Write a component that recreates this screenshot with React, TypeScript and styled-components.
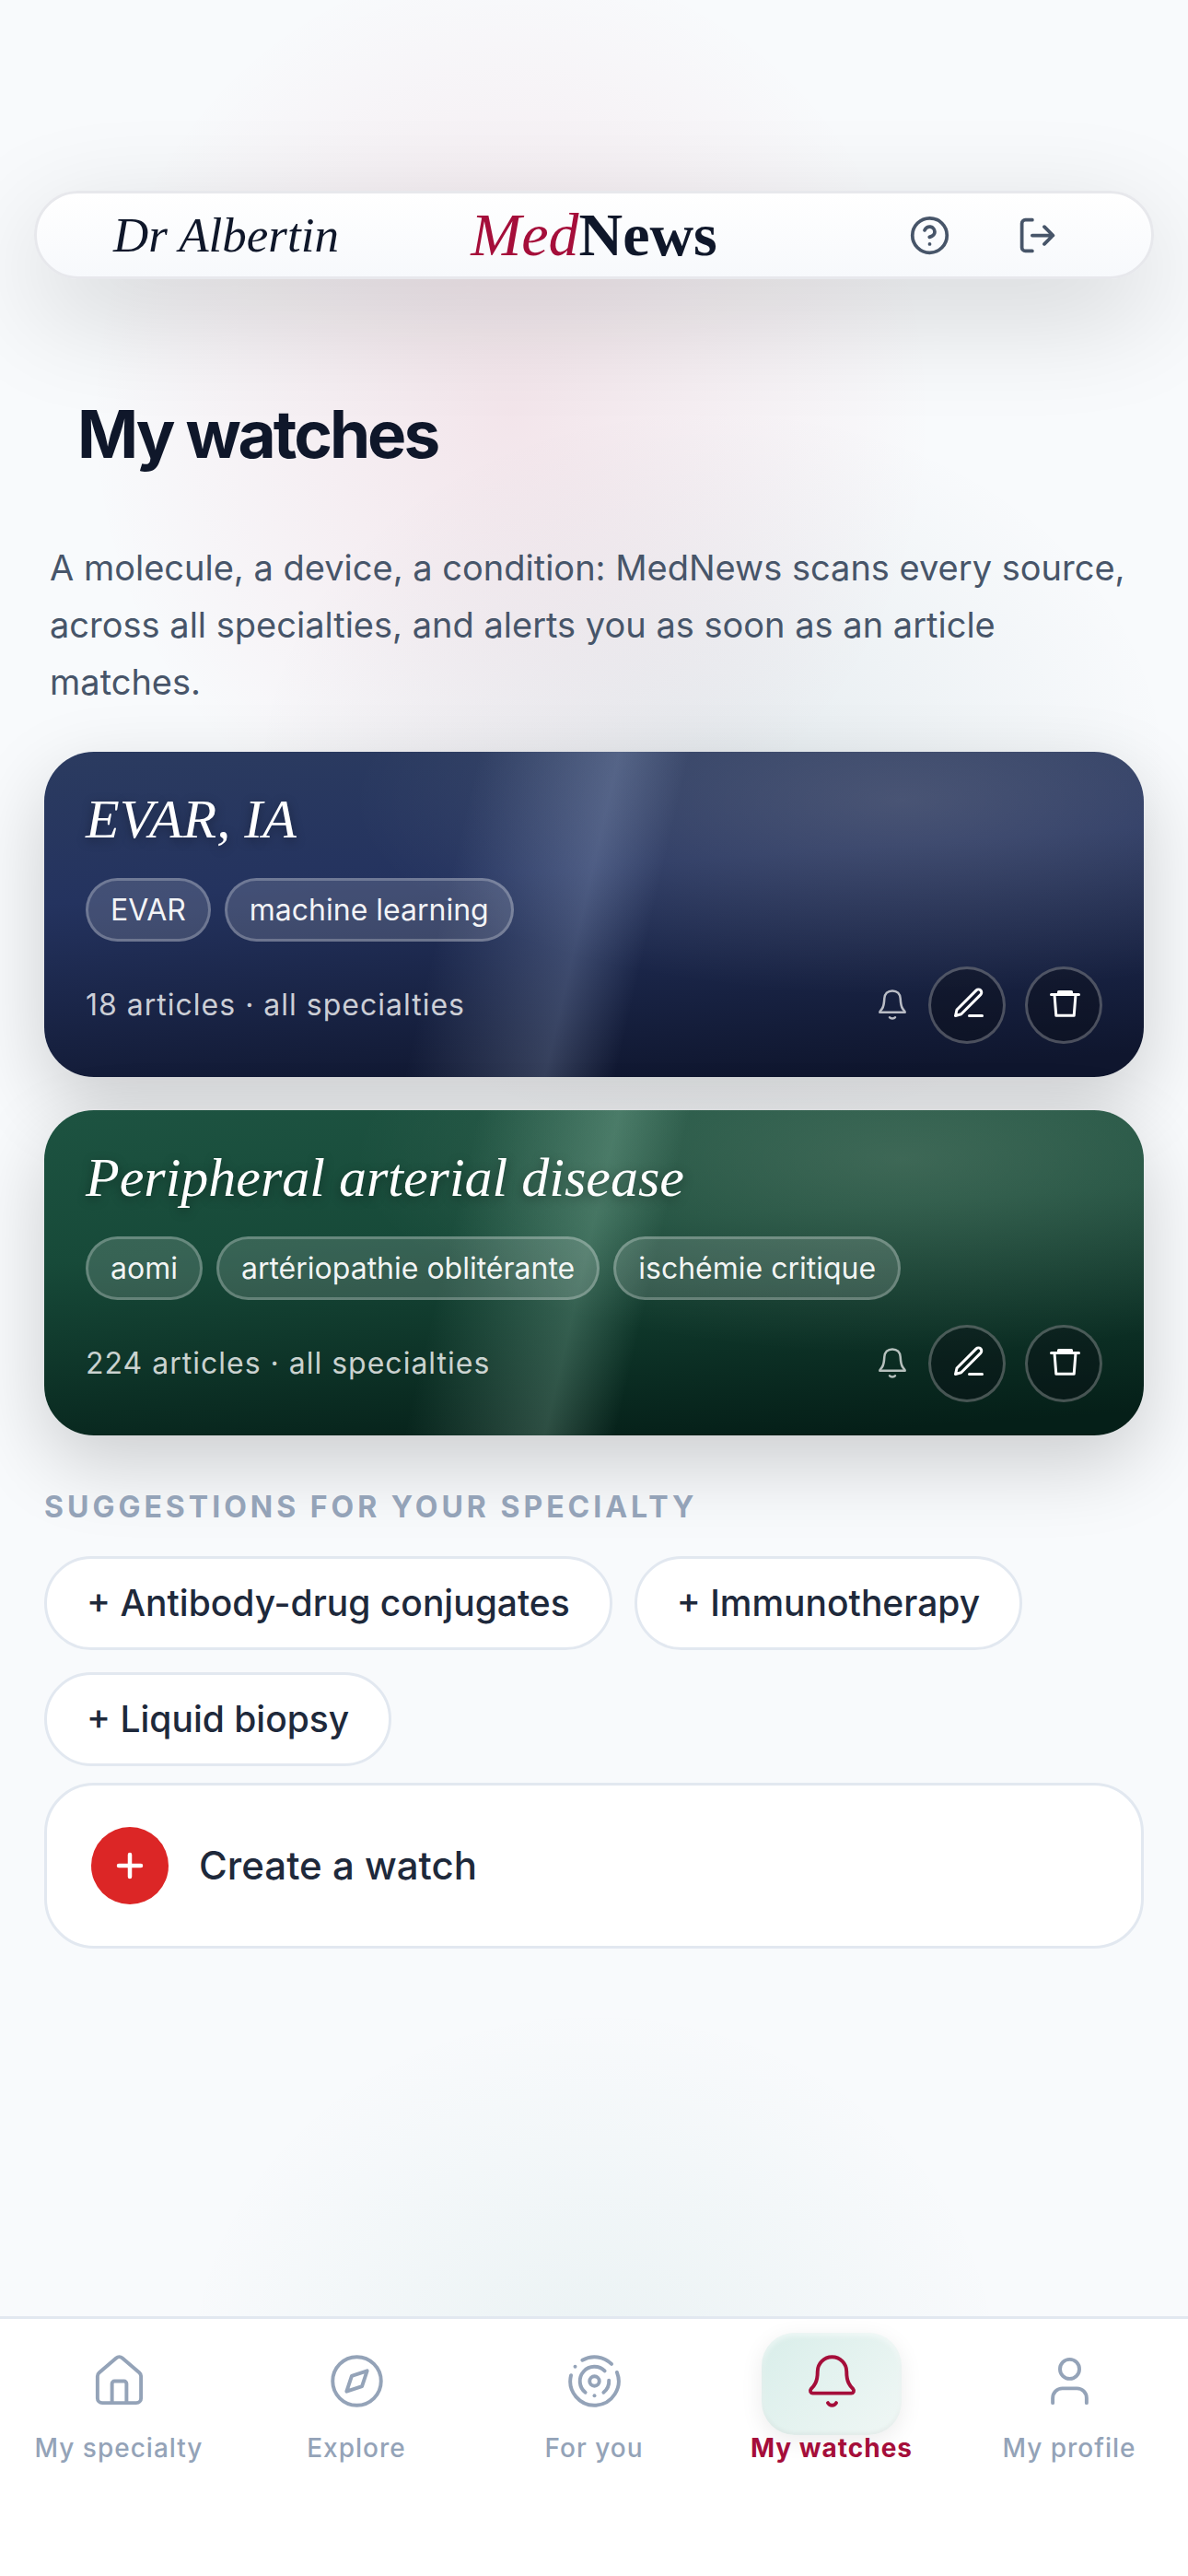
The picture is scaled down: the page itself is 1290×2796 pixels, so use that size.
import React from "react";
import styled, { createGlobalStyle } from "styled-components";

const sans = `Inter, "Liberation Sans", sans-serif`;
const serif = `"Liberation Serif", serif`;

const GlobalStyle = createGlobalStyle`
  *, *::before, *::after { box-sizing: border-box; }
  body { margin: 0; background: #f8fafc; font-family: ${sans}; color: #0f172a; }
  button, a { font: inherit; color: inherit; text-decoration: none; }
  button { cursor: pointer; }
  h1, h2, h3, p, ul { margin: 0; padding: 0; }
  ul { list-style: none; }
`;

const Screen = styled.div`
  min-height: 100vh;
  display: flex;
  flex-direction: column;
  background:
    radial-gradient(ellipse 460px 500px at 43% 450px, rgba(190, 18, 60, 0.09), rgba(190, 18, 60, 0) 100%),
    radial-gradient(ellipse 500px 400px at 60% 840px, rgba(15, 70, 90, 0.08), rgba(15, 70, 90, 0) 100%),
    radial-gradient(ellipse 450px 400px at 50% calc(100% - 220px), rgba(15, 118, 110, 0.06), rgba(15, 118, 110, 0) 100%),
    #f8fafc;
`;

const Header = styled.header`
  display: grid;
  grid-template-columns: 1fr auto 1fr;
  align-items: center;
  height: 96px;
  margin: 207px 37px 0;
  padding: 0 83px;
  border: 3px solid #e7e8ec;
  border-radius: 48px;
  background: linear-gradient(#ffffff, #f7f9fc);
  box-shadow: 0 36px 120px rgba(0, 0, 0, 0.16);
`;

const UserName = styled.span`
  font: italic 400 53px/60px ${serif};
`;

const Brand = styled.span`
  font: 700 66px/66px ${serif};
  em { font-weight: 400; color: #a50e3a; }
`;

const HeaderActions = styled.div`
  display: flex;
  justify-content: flex-end;
  gap: 72px;
  padding-right: 18px;
`;

const PlainButton = styled.button<{ $color: string }>`
  display: flex;
  padding: 0;
  border: 0;
  background: none;
  color: ${(p) => p.$color};
`;

const Main = styled.main`
  flex: 1;
  display: flex;
  flex-direction: column;
  padding: 123px 48px 0;
`;

const PageTitle = styled.h1`
  padding-left: 36px;
  font-size: 71px;
  line-height: 90px;
  font-weight: 700;
  letter-spacing: -3px;
`;

const Intro = styled.p`
  margin-top: 69px;
  padding-left: 6px;
  font-size: 38px;
  line-height: 62px;
  color: #475569;
`;

const WatchList = styled.ul`
  display: flex;
  flex-direction: column;
  gap: 36px;
  margin-top: 45px;
`;

const WatchCard = styled.li<{ $top: string; $mid: string; $bottom: string; $sheen: string }>`
  padding: 36px 45px;
  border-radius: 54px;
  color: #fff;
  background:
    linear-gradient(
      103deg,
      rgba(${(p) => p.$sheen}, 0) 37%,
      rgba(${(p) => p.$sheen}, 0.2) 49%,
      rgba(${(p) => p.$sheen}, 0) 55%
    ),
    radial-gradient(ellipse 50% 60% at 78% 15%, rgba(255, 245, 225, 0.16), rgba(255, 245, 225, 0) 100%),
    linear-gradient(176deg, ${(p) => p.$top} 0%, ${(p) => p.$mid} 38%, ${(p) => p.$bottom} 94%);
  box-shadow: 0 30px 84px rgba(0, 0, 0, 0.18);
`;

const WatchTitle = styled.h2`
  font: italic 400 60px/74px ${serif};
  text-shadow: 0 3px 12px rgba(0, 0, 0, 0.35);
`;

const Keywords = styled.ul`
  display: flex;
  flex-wrap: wrap;
  gap: 15px;
  margin-top: 27px;
`;

const Keyword = styled.li`
  padding: 0 24px;
  border: 3px solid rgba(255, 255, 255, 0.24);
  border-radius: 36px;
  background: rgba(255, 255, 255, 0.14);
  font-size: 32px;
  line-height: 63px;
  font-weight: 400;
  color: rgba(255, 255, 255, 0.94);
`;

const WatchFooter = styled.div`
  display: flex;
  align-items: center;
  gap: 21px;
  margin-top: 27px;
`;

const WatchMeta = styled.p`
  flex: 1;
  font-size: 32px;
  line-height: 48px;
  letter-spacing: 1px;
  color: rgba(255, 255, 255, 0.78);
`;

const RoundButton = styled.button`
  display: flex;
  align-items: center;
  justify-content: center;
  width: 84px;
  height: 84px;
  padding: 0;
  border: 3px solid rgba(255, 255, 255, 0.26);
  border-radius: 50%;
  background: rgba(10, 12, 20, 0.4);
  color: #fff;
`;

const SectionTitle = styled.h3`
  margin-top: 60px;
  font-size: 32px;
  line-height: 36px;
  font-weight: 700;
  letter-spacing: 4px;
  text-transform: uppercase;
  color: #94a3b8;
`;

const Suggestions = styled.div`
  display: flex;
  flex-wrap: wrap;
  gap: 24px;
  margin-top: 35px;
`;

const SuggestionButton = styled.button`
  height: 102px;
  padding: 0 43px;
  border: 3px solid #e2e8f0;
  border-radius: 51px;
  background: #fff;
  color: #1e293b;
  font-size: 39px;
  line-height: 48px;
  font-weight: 500;
`;

const CreateButton = styled.button`
  display: flex;
  align-items: center;
  gap: 33px;
  height: 180px;
  margin-top: 18px;
  padding: 0 48px;
  border: 3px solid #e2e8f0;
  border-radius: 54px;
  background: #fff;
  color: #1e293b;
  font-size: 42px;
  line-height: 54px;
  font-weight: 500;
`;

const PlusBadge = styled.span`
  display: flex;
  align-items: center;
  justify-content: center;
  width: 84px;
  height: 84px;
  border-radius: 50%;
  background: #dc2626;
  color: #fff;
`;

const TabBar = styled.nav`
  display: grid;
  grid-template-columns: repeat(5, 1fr);
  height: 282px;
  padding-top: 15px;
  border-top: 3px solid #e2e8f0;
  background: #fff;
`;

const Tab = styled.a<{ $active?: boolean }>`
  display: flex;
  flex-direction: column;
  align-items: center;
  height: 144px;
  font-size: 28px;
  line-height: 28px;
  font-weight: ${(p) => (p.$active ? 700 : 500)};
  letter-spacing: 1px;
  && { color: ${(p) => (p.$active ? "#a50e3a" : "#94a3b8")}; }
`;

const TabIcon = styled.span<{ $active?: boolean }>`
  display: flex;
  align-items: center;
  justify-content: center;
  width: 152px;
  height: 111px;
  padding-bottom: 6px;
  border-radius: 36px;
  ${(p) =>
    p.$active &&
    `background: linear-gradient(135deg, #d9eeea, #f0f7f5);
     box-shadow: 0 6px 24px rgba(0, 0, 0, 0.08), inset 0 3px 6px rgba(255, 255, 255, 0.6), inset 0 -2px 5px rgba(0, 0, 0, 0.06);`}
`;

interface IconProps {
  size: number;
  box?: number;
  stroke?: number;
  children: React.ReactNode;
}

const Icon = ({ size, box = 24, stroke = 2, children }: IconProps) => (
  <svg
    width={size}
    height={size}
    viewBox={`0 0 ${box} ${box}`}
    fill="none"
    stroke="currentColor"
    strokeWidth={stroke}
    strokeLinecap="round"
    strokeLinejoin="round"
    aria-hidden="true"
  >
    {children}
  </svg>
);

const watches = [
  {
    title: "EVAR, IA",
    keywords: ["EVAR", "machine learning"],
    count: 18,
    colors: ["#2b3b60", "#24335f", "#0f162e"],
    sheen: "200, 220, 255",
  },
  {
    title: "Peripheral arterial disease",
    keywords: ["aomi", "artériopathie oblitérante", "ischémie critique"],
    count: 224,
    colors: ["#1d5341", "#174a39", "#051f18"],
    sheen: "200, 250, 225",
  },
];

const suggestions = ["Antibody-drug conjugates", "Immunotherapy", "Liquid biopsy"];

const tabs = [
  {
    label: "My specialty",
    icon: (
      <>
        <path d="M15 21v-8a1 1 0 0 0-1-1h-4a1 1 0 0 0-1 1v8" />
        <path d="M3 10a2 2 0 0 1 .709-1.528l7-6a2 2 0 0 1 2.582 0l7 6A2 2 0 0 1 21 10v9a2 2 0 0 1-2 2H5a2 2 0 0 1-2-2z" />
      </>
    ),
  },
  {
    label: "Explore",
    icon: (
      <>
        <circle cx="12" cy="12" r="10" />
        <path d="M16.240 7.760 14.120 14.120 7.760 16.240 9.880 9.880z" />
      </>
    ),
  },
  {
    label: "For you",
    icon: (
      <>
        <path d="M19.070 4.930A10 10 0 0 0 6.990 3.340" />
        <path d="M4 6h.01" />
        <path d="M2.290 9.620A10 10 0 1 0 21.310 8.350" />
        <path d="M16.240 7.760A6 6 0 1 0 8.230 16.670" />
        <path d="M12 18h.01" />
        <path d="M17.990 11.660A6 6 0 0 1 15.770 16.670" />
        <circle cx="12" cy="12" r="2" />
      </>
    ),
  },
  {
    label: "My watches",
    active: true,
    icon: (
      <>
        <path d="M10.268 21a2 2 0 0 0 3.464 0" />
        <path d="M3.262 15.326A1 1 0 0 0 4 17h16a1 1 0 0 0 .74-1.673C19.410 13.956 18 12.499 18 8A6 6 0 0 0 6 8c0 4.499-1.411 5.956-2.738 7.326" />
      </>
    ),
  },
  {
    label: "My profile",
    icon: (
      <>
        <path d="M19 21v-2a4 4 0 0 0-4-4H9a4 4 0 0 0-4 4v2" />
        <circle cx="12" cy="7" r="4" />
      </>
    ),
  },
];

export default function App() {
  return (
    <>
      <GlobalStyle />
      <Screen>
        <Header>
          <UserName>Dr Albertin</UserName>
          <Brand>
            <em>Med</em>News
          </Brand>
          <HeaderActions>
            <PlainButton $color="#475569" aria-label="Help">
              <Icon size={45}>
                <circle cx="12" cy="12" r="10" />
                <path d="M9.090 9a3 3 0 0 1 5.830 1c0 2-3 3-3 3M12 17h.01" />
              </Icon>
            </PlainButton>
            <PlainButton $color="#475569" aria-label="Log out">
              <Icon size={45}>
                <path d="M9 21H5a2 2 0 0 1-2-2V5a2 2 0 0 1 2-2h4M16 17l5-5-5-5M21 12H9" />
              </Icon>
            </PlainButton>
          </HeaderActions>
        </Header>

        <Main>
          <PageTitle>My watches</PageTitle>
          <Intro>
            A molecule, a device, a condition: MedNews scans every source, across all specialties, and alerts you as soon as an article matches.
          </Intro>

          <WatchList>
            {watches.map((w) => (
              <WatchCard key={w.title} $top={w.colors[0]} $mid={w.colors[1]} $bottom={w.colors[2]} $sheen={w.sheen}>
                <WatchTitle>{w.title}</WatchTitle>
                <Keywords>
                  {w.keywords.map((k) => (
                    <Keyword key={k}>{k}</Keyword>
                  ))}
                </Keywords>
                <WatchFooter>
                  <WatchMeta>{w.count} articles · all specialties</WatchMeta>
                  <PlainButton $color="rgba(255, 255, 255, 0.7)" aria-label="Notifications">
                    <Icon size={36} box={36} stroke={2.5}>
                      <path d="M18 2.400C12.800 2.400 9.600 5.800 9.300 10.800C9 16.300 8.900 18.800 6.900 21.800C5.900 23.300 4.300 24.400 4.300 25.700H31.700C31.700 24.400 30.100 23.300 29.100 21.800C27.100 18.800 27 16.300 26.700 10.800C26.400 5.800 23.200 2.400 18 2.400z" />
                      <path d="M15 31.200a3.400 2.400 0 0 0 6 0" />
                    </Icon>
                  </PlainButton>
                  <RoundButton aria-label="Edit">
                    <Icon size={42} box={42} stroke={3}>
                      <path d="M8.500 32.500 10 26 31.100 4.900a3.300 3.300 0 0 1 4.700 4.700L14.700 30.700zM23.500 32.500h14" />
                    </Icon>
                  </RoundButton>
                  <RoundButton aria-label="Delete">
                    <Icon size={42} box={42} stroke={3}>
                      <path d="M7.500 9.500h30M15.500 9V6.500h14V9M11 9.500l1.800 22.800h19.400L34 9.500" />
                    </Icon>
                  </RoundButton>
                </WatchFooter>
              </WatchCard>
            ))}
          </WatchList>

          <SectionTitle>Suggestions for your specialty</SectionTitle>
          <Suggestions>
            {suggestions.map((s) => (
              <SuggestionButton key={s}>+ {s}</SuggestionButton>
            ))}
          </Suggestions>
          <CreateButton>
            <PlusBadge>
              <Icon size={36} stroke={3}>
                <path d="M12 4v16M4 12h16" />
              </Icon>
            </PlusBadge>
            Create a watch
          </CreateButton>
        </Main>

        <TabBar>
          {tabs.map((t) => (
            <Tab key={t.label} href="#" $active={t.active} aria-current={t.active ? "page" : undefined}>
              <TabIcon $active={t.active}>
                <Icon size={63} stroke={1.5}>
                  {t.icon}
                </Icon>
              </TabIcon>
              {t.label}
            </Tab>
          ))}
        </TabBar>
      </Screen>
    </>
  );
}
